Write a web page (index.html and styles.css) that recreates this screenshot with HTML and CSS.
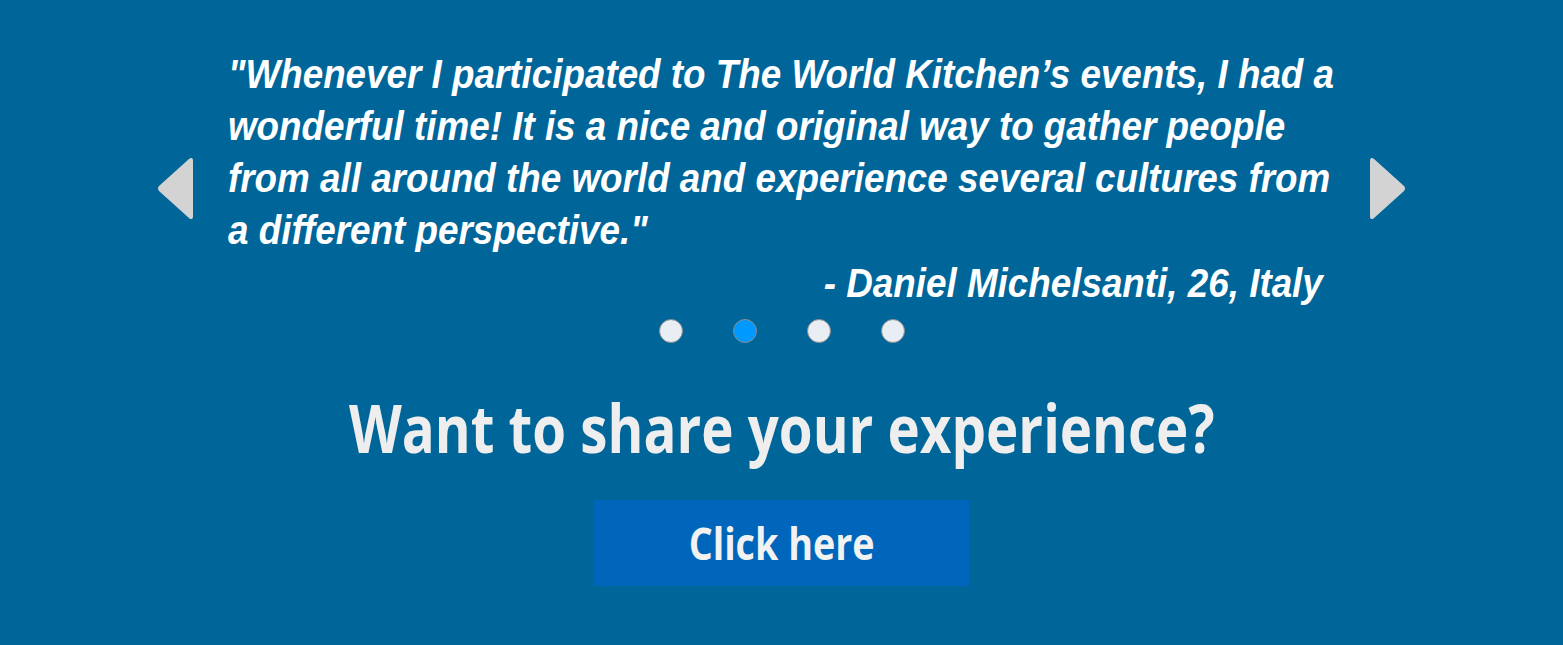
FILE: index.html
```html
<!DOCTYPE html>
<html>
<head>
<meta charset="utf-8">
<link rel="stylesheet" href="styles.css">
</head>
<body>
<section class="testimonials">
  <div class="slider">
    <button class="arrow arrow-left" aria-label="Previous">
      <svg viewBox="0 0 37 63" width="37" height="63"><path d="M32.5 1.5 Q36 -0.5 36 4 L36 59 Q36 63.5 32.5 61.5 L2 34 Q0 31.5 2 29 Z" fill="#d3d3d3"/></svg>
    </button>
    <div class="quote-wrap">
      <blockquote class="quote">
        <p class="quote-text">"Whenever I participated to The World Kitchen’s events, I had a wonderful time! It is a nice and original way to gather people from all around the world and experience several cultures from a different perspective."</p>
        <p class="quote-author">- Daniel Michelsanti, 26, Italy</p>
      </blockquote>
    </div>
    <button class="arrow arrow-right" aria-label="Next">
      <svg viewBox="0 0 37 63" width="37" height="63"><path d="M4.5 1.5 Q1 -0.5 1 4 L1 59 Q1 63.5 4.5 61.5 L35 34 Q37 31.5 35 29 Z" fill="#d3d3d3"/></svg>
    </button>
  </div>
  <div class="dots">
    <span class="dot"></span>
    <span class="dot active"></span>
    <span class="dot"></span>
    <span class="dot"></span>
  </div>
  <h2 class="cta-title">Want to share your experience?</h2>
  <a class="cta-button" href="#"><span class="cta-label">Click here</span></a>
</section>
</body>
</html>
```
FILE: styles.css
```css
html, body {
  margin: 0;
  padding: 0;
  background: #006699;
}
.testimonials {
  width: 1563px;
  height: 645px;
  background: #006699;
  display: flex;
  flex-direction: column;
  align-items: center;
  box-sizing: border-box;
  padding-top: 48px;
}
.slider {
  display: flex;
  align-items: flex-start;
  width: 1563px;
  padding-left: 157px;
  box-sizing: border-box;
}
.arrow {
  background: none;
  border: 0;
  padding: 0;
  margin-top: 109px;
  width: 37px;
  height: 63px;
  display: block;
  flex: none;
}
.arrow svg { display: block; }
.quote-wrap {
  width: 1141px;
  margin-left: 34px;
  flex: none;
}
.quote {
  margin: 0;
  width: 1220px;
  transform: scaleX(0.92);
  transform-origin: left top;
  font-family: "Liberation Sans", Arial, sans-serif;
  font-weight: bold;
  font-style: italic;
  color: #ffffff;
}
.quote-text {
  margin: 0;
  font-size: 40px;
  line-height: 52px;
}
.quote-author {
  margin: 1px 0 0 0;
  font-size: 40px;
  line-height: 52px;
  text-align: right;
  padding-right: 30px;
}
.dots {
  display: flex;
  gap: 50px;
  margin-top: 10px;
}
.dot {
  width: 22px;
  height: 22px;
  border-radius: 50%;
  background: #e8eef4;
  border: 1px solid #8a8a8a;
}
.dot.active {
  background: #0099ff;
}
.cta-title {
  margin: 44px 0 0 0;
  font-family: "Open Sans", "Noto Sans", sans-serif;
  font-weight: bold;
  font-size: 66px;
  line-height: 80px;
  color: #eeeeee;
  white-space: nowrap;
  transform: scaleX(0.828);
}
.cta-button {
  margin-top: 33px;
  width: 375px;
  height: 86px;
  background: #0066bb;
  color: #f2f2f2;
  font-family: "Open Sans", "Noto Sans", sans-serif;
  font-weight: bold;
  font-size: 44px;
  line-height: 86px;
  text-align: center;
  text-decoration: none;
}
.cta-label {
  display: inline-block;
  transform: scaleX(0.856);
}
```
